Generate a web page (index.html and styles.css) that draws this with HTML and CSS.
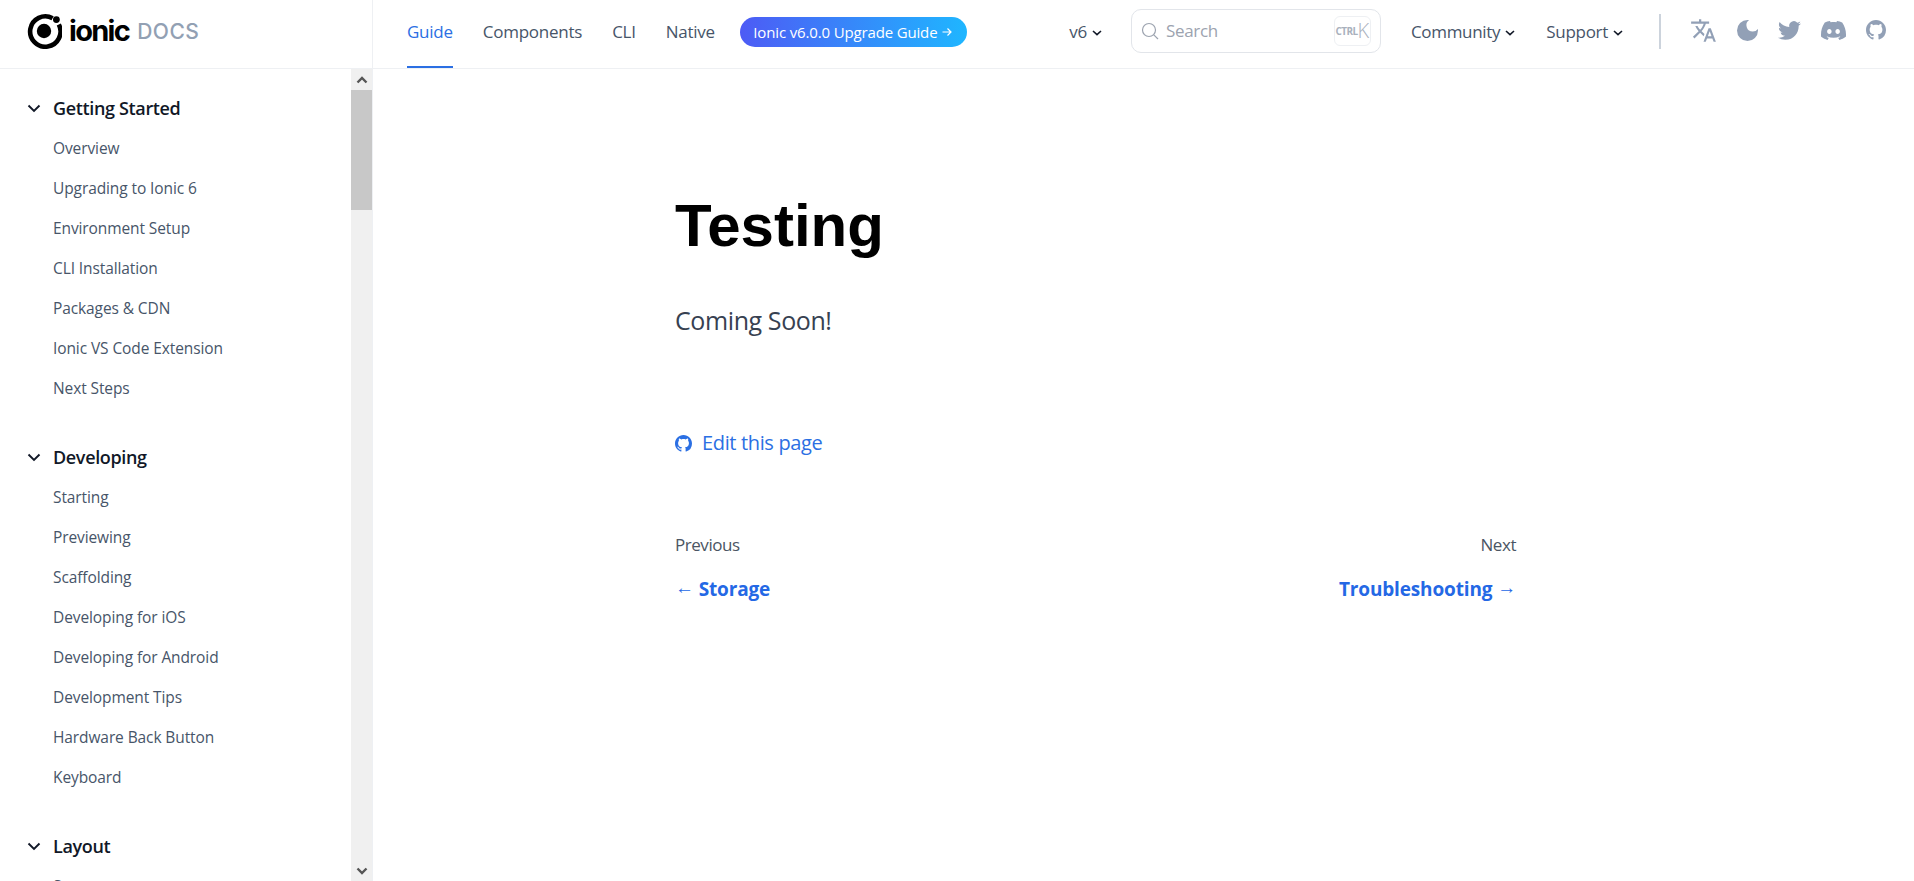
FILE: index.html
```html
<!DOCTYPE html>
<html lang="en">

<head>
    <meta charset="UTF-8">
    <meta name="viewport" content="width=device-width, initial-scale=1.0">
    <title>Testing - Ionic Docs</title>
    <link rel="stylesheet" href="styles.css">
</head>

<body>
    <header class="topbar">
        <a class="brand" href="#">
            <svg class="brand-logo" viewBox="0 0 36 36" width="36" height="36">
                <path d="M26.6 5.2A15.2 15.2 0 1 0 32.8 11.5" fill="none" stroke="#000" stroke-width="4.6" />
                <circle cx="18" cy="18" r="7.2" fill="#000" />
                <circle cx="30.4" cy="6.6" r="3.4" fill="#000" />
            </svg>
            <span class="brand-name">ionic</span>
            <span class="brand-docs">DOCS</span>
        </a>
        <nav class="topnav">
            <a class="topnav-link active" href="#">Guide</a>
            <a class="topnav-link" href="#">Components</a>
            <a class="topnav-link" href="#">CLI</a>
            <a class="topnav-link" href="#">Native</a>
            <a class="upgrade-pill" href="#">Ionic v6.0.0 Upgrade Guide
                <svg viewBox="0 0 12 12" width="12" height="12">
                    <path d="M1.5 6h8.5M6.5 2.5 10 6l-3.5 3.5" fill="none" stroke="#fff" stroke-width="1.2" />
                </svg>
            </a>
        </nav>
        <div class="toolbar">
            <a class="menu-link version" href="#">v6
                <svg class="caret" viewBox="0 0 10 6" width="10" height="6"><path d="M1 1l4 3.6L9 1" /></svg>
            </a>
            <div class="search">
                <svg viewBox="0 0 18 18" width="18" height="18">
                    <circle cx="8" cy="8" r="6.5" fill="none" stroke="#9ca3af" stroke-width="1.2" />
                    <path d="M12.8 12.8 17 17" stroke="#9ca3af" stroke-width="1.2" />
                </svg>
                <span class="search-label">Search</span>
                <span class="search-key"><small>CTRL</small>K</span>
            </div>
            <a class="menu-link community" href="#">Community
                <svg class="caret" viewBox="0 0 10 6" width="10" height="6"><path d="M1 1l4 3.6L9 1" /></svg>
            </a>
            <a class="menu-link support" href="#">Support
                <svg class="caret" viewBox="0 0 10 6" width="10" height="6"><path d="M1 1l4 3.6L9 1" /></svg>
            </a>
            <span class="toolbar-rule"></span>
            <div class="icon-row">
                <svg viewBox="0 0 24 24" width="27" height="27"><path d="M12.87 15.07l-2.54-2.51.03-.03c1.74-1.94 2.98-4.17 3.71-6.53H17V4h-7V2H8v2H1v1.99h11.17C11.5 7.92 10.44 9.75 9 11.35 8.07 10.32 7.3 9.19 6.69 8h-2c.73 1.63 1.73 3.17 2.98 4.56l-5.09 5.02L4 19l5-5 3.11 3.11.76-2.04zM18.5 10h-2L12 22h2l1.12-3h4.75L21 22h2l-4.5-12zm-2.62 7l1.62-4.33L19.12 17h-3.24z" /></svg>
                <svg viewBox="3 3 18 18" width="21" height="21"><path d="M12 3a9 9 0 1 0 9 9c0-.46-.04-.92-.1-1.36a5.389 5.389 0 0 1-4.4 2.26 5.403 5.403 0 0 1-3.14-9.8c-.44-.06-.9-.1-1.36-.1z" /></svg>
                <svg viewBox="0 0 24 24" width="23" height="23"><path d="M23.953 4.57a10 10 0 01-2.825.775 4.958 4.958 0 002.163-2.723c-.951.555-2.005.959-3.127 1.184a4.92 4.92 0 00-8.384 4.482C7.69 8.095 4.067 6.13 1.64 3.162a4.822 4.822 0 00-.666 2.475c0 1.71.87 3.213 2.188 4.096a4.904 4.904 0 01-2.228-.616v.06a4.923 4.923 0 003.946 4.827 4.996 4.996 0 01-2.212.085 4.936 4.936 0 004.604 3.417 9.867 9.867 0 01-6.102 2.105c-.39 0-.779-.023-1.17-.067a13.995 13.995 0 007.557 2.209c9.053 0 13.998-7.496 13.998-13.985 0-.21 0-.42-.015-.63A9.935 9.935 0 0024 4.59z" /></svg>
                <svg viewBox="0 0 24 24" width="25" height="25"><path d="M20.317 4.3698a19.7913 19.7913 0 00-4.8851-1.5152.0741.0741 0 00-.0785.0371c-.211.3753-.4447.8648-.6083 1.2495-1.8447-.2762-3.68-.2762-5.4868 0-.1636-.3933-.4058-.8742-.6177-1.2495a.077.077 0 00-.0785-.037 19.7363 19.7363 0 00-4.8852 1.515.0699.0699 0 00-.0321.0277C.5334 9.0458-.319 13.5799.0992 18.0578a.0824.0824 0 00.0312.0561c2.0528 1.5076 4.0413 2.4228 5.9929 3.0294a.0777.0777 0 00.0842-.0276c.4616-.6304.8731-1.2952 1.226-1.9942a.076.076 0 00-.0416-.1057c-.6528-.2476-1.2743-.5495-1.8722-.8923a.077.077 0 01-.0076-.1277c.1258-.0943.2517-.1923.3718-.2914a.0743.0743 0 01.0776-.0105c3.9278 1.7933 8.18 1.7933 12.0614 0a.0739.0739 0 01.0785.0095c.1202.099.246.1981.3728.2924a.077.077 0 01-.0066.1276 12.2986 12.2986 0 01-1.873.8914.0766.0766 0 00-.0407.1067c.3604.698.7719 1.3628 1.225 1.9932a.076.076 0 00.0842.0286c1.961-.6067 3.9495-1.5219 6.0023-3.0294a.077.077 0 00.0313-.0552c.5004-5.177-.8382-9.6739-3.5485-13.6604a.061.061 0 00-.0312-.0286zM8.02 15.3312c-1.1825 0-2.1569-1.0857-2.1569-2.419 0-1.3332.9555-2.4189 2.157-2.4189 1.2108 0 2.1757 1.0952 2.1568 2.419 0 1.3332-.9555 2.4189-2.1569 2.4189zm7.9748 0c-1.1825 0-2.1569-1.0857-2.1569-2.419 0-1.3332.9554-2.4189 2.1569-2.4189 1.2108 0 2.1757 1.0952 2.1568 2.419 0 1.3332-.946 2.4189-2.1568 2.4189z" /></svg>
                <svg viewBox="0 0 16 16" width="20" height="20"><path d="M8 0C3.58 0 0 3.58 0 8c0 3.54 2.29 6.53 5.47 7.59.4.07.55-.17.55-.38 0-.19-.01-.82-.01-1.49-2.01.37-2.53-.49-2.69-.94-.09-.23-.48-.94-.82-1.13-.28-.15-.68-.52-.01-.53.63-.01 1.08.58 1.23.82.72 1.21 1.87.87 2.33.66.07-.52.28-.87.51-1.07-1.78-.2-3.64-.89-3.64-3.95 0-.87.31-1.59.82-2.15-.08-.2-.36-1.02.08-2.12 0 0 .67-.21 2.2.82.64-.18 1.32-.27 2-.27.68 0 1.36.09 2 .27 1.53-1.04 2.2-.82 2.2-.82.44 1.1.16 1.92.08 2.12.51.56.82 1.27.82 2.15 0 3.07-1.87 3.75-3.65 3.95.29.25.54.73.54 1.48 0 1.07-.01 1.93-.01 2.2 0 .21.15.46.55.38A8.013 8.013 0 0016 8c0-4.42-3.58-8-8-8z" /></svg>
            </div>
        </div>
    </header>

    <div class="layout">
        <aside class="sidebar">
            <div class="sidebar-list">
                <section class="side-group">
                    <h3 class="side-title"><svg viewBox="0 0 14 9" width="14" height="9"><path d="M1.5 1.5 7 7l5.5-5.5" /></svg>Getting Started</h3>
                    <a href="#">Overview</a>
                    <a href="#">Upgrading to Ionic 6</a>
                    <a href="#">Environment Setup</a>
                    <a href="#">CLI Installation</a>
                    <a href="#">Packages &amp; CDN</a>
                    <a href="#">Ionic VS Code Extension</a>
                    <a href="#">Next Steps</a>
                </section>
                <section class="side-group">
                    <h3 class="side-title"><svg viewBox="0 0 14 9" width="14" height="9"><path d="M1.5 1.5 7 7l5.5-5.5" /></svg>Developing</h3>
                    <a href="#">Starting</a>
                    <a href="#">Previewing</a>
                    <a href="#">Scaffolding</a>
                    <a href="#">Developing for iOS</a>
                    <a href="#">Developing for Android</a>
                    <a href="#">Development Tips</a>
                    <a href="#">Hardware Back Button</a>
                    <a href="#">Keyboard</a>
                </section>
                <section class="side-group">
                    <h3 class="side-title"><svg viewBox="0 0 14 9" width="14" height="9"><path d="M1.5 1.5 7 7l5.5-5.5" /></svg>Layout</h3>
                    <a href="#">Structure</a>
                </section>
            </div>
            <div class="scrollbar">
                <span class="scroll-btn"><svg viewBox="0 0 12 8" width="12" height="8"><path d="M1.5 6.5 6 2l4.5 4.5" /></svg></span>
                <span class="scroll-thumb"></span>
                <span class="scroll-btn scroll-btn-down"><svg viewBox="0 0 12 8" width="12" height="8"><path d="M1.5 1.5 6 6l4.5-4.5" /></svg></span>
            </div>
        </aside>

        <main class="content">
            <h1>Testing</h1>
            <p class="lead">Coming Soon!</p>
            <a class="edit-link" href="#">
                <svg viewBox="0 0 16 16" width="17" height="17"><path d="M8 0C3.58 0 0 3.58 0 8c0 3.54 2.29 6.53 5.47 7.59.4.07.55-.17.55-.38 0-.19-.01-.82-.01-1.49-2.01.37-2.53-.49-2.69-.94-.09-.23-.48-.94-.82-1.13-.28-.15-.68-.52-.01-.53.63-.01 1.08.58 1.23.82.72 1.21 1.87.87 2.33.66.07-.52.28-.87.51-1.07-1.78-.2-3.64-.89-3.64-3.95 0-.87.31-1.59.82-2.15-.08-.2-.36-1.02.08-2.12 0 0 .67-.21 2.2.82.64-.18 1.32-.27 2-.27.68 0 1.36.09 2 .27 1.53-1.04 2.2-.82 2.2-.82.44 1.1.16 1.92.08 2.12.51.56.82 1.27.82 2.15 0 3.07-1.87 3.75-3.65 3.95.29.25.54.73.54 1.48 0 1.07-.01 1.93-.01 2.2 0 .21.15.46.55.38A8.013 8.013 0 0016 8c0-4.42-3.58-8-8-8z" /></svg>
                Edit this page
            </a>
            <div class="pager">
                <div>
                    <div class="pager-label">Previous</div>
                    <a class="pager-link" href="#"><span class="pager-arrow">←</span> Storage</a>
                </div>
                <div class="pager-next">
                    <div class="pager-label">Next</div>
                    <a class="pager-link" href="#">Troubleshooting <span class="pager-arrow">→</span></a>
                </div>
            </div>
        </main>
    </div>
</body>

</html>
```

FILE: styles.css
```css
* {
    box-sizing: border-box;
}

html,
body {
    height: 100%;
}

body {
    margin: 0;
    overflow: hidden;
    background-color: #fff;
    font-family: "Open Sans", "Noto Sans", sans-serif;
    color: #475569;
}

a {
    color: inherit;
    text-decoration: none;
}

.topbar {
    display: flex;
    height: 69px;
    border-bottom: 1px solid #eef0f3;
}

.brand {
    display: flex;
    align-items: center;
    flex: none;
    width: 373px;
    padding: 0 0 7px 26px;
    border-right: 1px solid #eef0f3;
}

.brand-logo {
    flex: none;
    margin-top: 1px;
}

.brand-name {
    margin-left: 7px;
    font-family: Inter, sans-serif;
    font-size: 29px;
    font-weight: 700;
    letter-spacing: -1.7px;
    color: #000;
}

.brand-docs {
    margin: 2px 0 0 8px;
    font-family: Inter, sans-serif;
    font-size: 21px;
    font-weight: 500;
    letter-spacing: 0.5px;
    color: #92a0b3;
}

.topnav {
    display: flex;
    align-items: center;
    height: 68px;
    margin-left: 34px;
}

.topnav-link {
    display: flex;
    align-items: center;
    height: 68px;
    margin-right: 30px;
    padding-bottom: 4px;
    border-bottom: 2px solid transparent;
    font-size: 17px;
    letter-spacing: -0.25px;
}

.topnav-link.active {
    color: #2b6fe3;
    border-bottom-color: #2b6fe3;
}

.upgrade-pill {
    display: flex;
    align-items: center;
    justify-content: center;
    gap: 4px;
    width: 227px;
    height: 30px;
    margin: -4px 0 0 -5px;
    border-radius: 15px;
    background: linear-gradient(90deg, #4d5bf5, #1fb6ff);
    color: #fff;
    font-size: 15px;
    font-weight: 500;
    letter-spacing: -0.15px;
}

.toolbar {
    display: flex;
    align-items: center;
    margin-left: auto;
    padding: 0 28px 6px 0;
}

.menu-link {
    display: flex;
    align-items: center;
    gap: 5px;
    font-size: 17px;
    letter-spacing: -0.3px;
}

.caret {
    margin-top: 3px;
    fill: none;
    stroke: #111827;
    stroke-width: 1.6;
}

.version {
    margin-right: 29px;
}

.search {
    display: flex;
    align-items: center;
    width: 250px;
    height: 44px;
    margin-bottom: 1px;
    padding: 0 9px;
    border: 1px solid #e2e5ea;
    border-radius: 10px;
    color: #9ca3af;
}

.search-label {
    margin-left: 7px;
    font-size: 17px;
    letter-spacing: -0.3px;
}

.search-key {
    display: flex;
    align-items: center;
    justify-content: center;
    width: 37px;
    height: 30px;
    margin-left: auto;
    border: 1px solid #eef0f3;
    border-radius: 6px;
    font-size: 20px;
    font-weight: 300;
    color: #a9b1bd;
}

.search-key small {
    font-size: 10px;
    font-weight: 700;
    letter-spacing: -0.6px;
}

.community {
    margin-left: 30px;
}

.support {
    margin-left: 31px;
}

.toolbar-rule {
    width: 2px;
    height: 35px;
    margin-left: 36px;
    background-color: #ccd3dc;
}

.icon-row {
    display: flex;
    align-items: center;
    gap: 20px;
    margin: 0 0 2px 29px;
    fill: #92a0b6;
}

.layout {
    display: flex;
    height: calc(100% - 69px);
}

.sidebar {
    display: flex;
    flex: none;
    width: 373px;
    overflow: hidden;
    border-right: 1px solid #eef0f3;
}

.sidebar-list {
    flex: 1;
    height: 100%;
    overflow: hidden;
    padding: 19px 0 0 53px;
}

.side-group {
    margin-bottom: 29px;
}

.side-group a {
    display: block;
    height: 40px;
    font-size: 15.5px;
    line-height: 41px;
    letter-spacing: -0.1px;
    white-space: nowrap;
}

.side-title {
    display: flex;
    align-items: center;
    height: 40px;
    margin: 0 0 0 -26px;
    font-size: 18px;
    font-weight: 600;
    letter-spacing: -0.35px;
    color: #111827;
}

.side-title svg {
    flex: none;
    margin-right: 12px;
    fill: none;
    stroke: #111827;
    stroke-width: 1.9;
}

.scrollbar {
    display: flex;
    flex-direction: column;
    flex: none;
    width: 21px;
    height: 100%;
    background-color: #f0f0f0;
}

.scroll-btn {
    display: flex;
    align-items: center;
    justify-content: center;
    flex: none;
    height: 21px;
}

.scroll-btn svg {
    fill: none;
    stroke: #555;
    stroke-width: 2.4;
}

.scroll-btn-down {
    margin-top: auto;
}

.scroll-thumb {
    flex: none;
    height: 120px;
    background-color: #c8c8c8;
}

.content {
    flex: 1;
    padding: 122px 0 0 302px;
}

h1 {
    margin: 0;
    font-family: "Liberation Sans", Arial, sans-serif;
    font-size: 60px;
    line-height: 70px;
    font-weight: 700;
    color: #000;
}

.lead {
    margin: 42px 0 0;
    font-size: 25px;
    line-height: 34px;
    letter-spacing: -0.4px;
    color: #374151;
}

.edit-link {
    display: flex;
    align-items: center;
    gap: 10px;
    margin-top: 91px;
    font-size: 20px;
    line-height: 30px;
    letter-spacing: -0.35px;
    color: #2b6fe3;
}

.edit-link svg {
    fill: #2b6fe3;
}

.pager {
    display: flex;
    justify-content: space-between;
    width: 841px;
    margin-top: 73px;
}

.pager-next {
    text-align: right;
}

.pager-label {
    font-size: 17px;
    line-height: 28px;
    letter-spacing: -0.45px;
    color: #4b5563;
}

.pager-link {
    display: block;
    margin-top: 14px;
    font-size: 19px;
    line-height: 28px;
    font-weight: 700;
    letter-spacing: -0.15px;
    color: #2468e5;
}

.pager-arrow {
    vertical-align: 2px;
}
```
